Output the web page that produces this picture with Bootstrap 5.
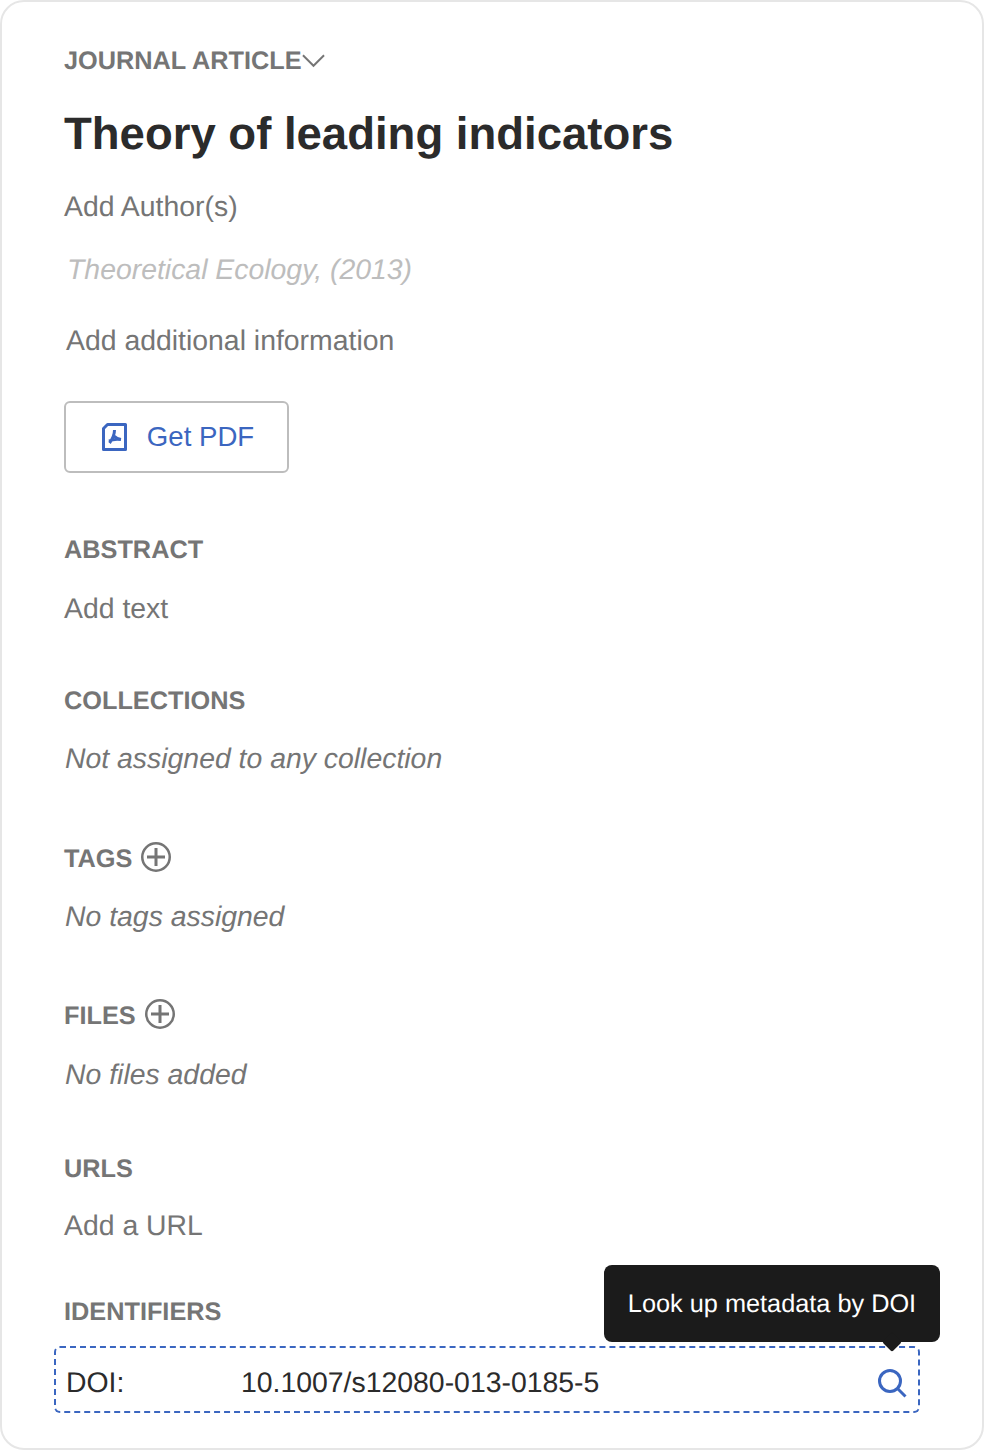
<!DOCTYPE html>
<html lang="en">
<head>
  <meta charset="UTF-8">
  <title>Theory of leading indicators</title>
  <link href="https://cdn.jsdelivr.net/npm/bootstrap@5.3.3/dist/css/bootstrap.min.css" rel="stylesheet">
  <style>
    body { margin: 0; background: #fff; font-family: "Liberation Sans", Arial, sans-serif; color: #757575; text-rendering: geometricPrecision; }
    .panel { width: 984px; height: 1450px; border: 2px solid #e6e6e6; border-radius: 24px; padding: 41px 62px 0; position: relative; }
    .sec-label { font-size: 25.3px; line-height: 36px; font-weight: 700; color: #757575; margin: 0; }
    .txt { font-size: 28.4px; line-height: 40px; margin: 0; }
    .doc-title { font-size: 45.5px; line-height: 56px; font-weight: 700; color: #2b2b2b; margin: 27px 0 0; }
    .muted-it { font-style: italic; padding-left: 1px; }
    .authors { margin-top: 25px; }
    .journal { color: #bdbdbd; padding-left: 3px; margin-top: 23px; }
    .extra-info { padding-left: 2px; margin-top: 31px; }
    .pdf-btn { width: 225px; height: 72px; border: 2px solid #bdbdbd; border-radius: 6px; background: #fff; color: #3b66c0; font-size: 27.6px; padding: 0 0 0 3px; margin-top: 40px; gap: 20px; }
    .lbl-abstract { margin-top: 59px; }
    .txt-abstract { margin-top: 21px; }
    .lbl-collections { margin-top: 54px; }
    .txt-collections { margin-top: 20px; }
    .lbl-tags { margin-top: 61px; }
    .txt-tags { margin-top: 20px; }
    .lbl-files { margin-top: 60px; }
    .txt-files { margin-top: 21px; }
    .lbl-urls { margin-top: 56px; }
    .txt-urls { margin-top: 19px; }
    .lbl-identifiers { margin-top: 48px; }
    .plus-row { gap: 9px; }
    .plus-row .sec-label { padding-top: 1px; }
    .plus-row svg { margin-bottom: 3px; }
    .doi-box { margin: 16px 0 0 -10px; height: 67px; border: 2px dashed #3b66c0; border-radius: 6px; color: #2b2b2b; font-size: 28.4px; padding: 7px 11px 0 10px; }
    .doi-key { width: 175px; }
    .tip { position: absolute; left: 602px; top: 1263px; width: 336px; height: 77px; padding-top: 2px; background: #1b1b1b; color: #fff; border-radius: 8px; font-size: 25.3px; }
    .tip::after { content: ""; position: absolute; left: 281px; bottom: -7px; width: 14px; height: 14px; background: #1b1b1b; transform: rotate(45deg); border-radius: 2px; }
  </style>
</head>
<body>
  <div class="panel">
    <div class="d-flex align-items-center">
      <h6 class="sec-label">JOURNAL ARTICLE</h6>
      <svg width="23" height="14" viewBox="0 0 24 14" fill="none" stroke="#757575" stroke-width="2"><path d="M1 1l11 11L23 1"/></svg>
    </div>
    <h1 class="doc-title">Theory of leading indicators</h1>
    <p class="txt authors">Add Author(s)</p>
    <p class="txt muted-it journal">Theoretical Ecology, (2013)</p>
    <p class="txt extra-info">Add additional information</p>
    <button class="pdf-btn d-flex align-items-center justify-content-center">
      <svg width="25" height="28" viewBox="0 0 25 28" fill="none" stroke="#3b66c0"><path d="M5.500 1.500h18v25h-22V5.500z" stroke-width="3" stroke-linejoin="round"/><path d="M12.500 7c0 5-2 9-5 13M12 13c2 2 4 3 7 3.500M7 18c3-1.500 8-2 12-1.500" stroke-width="3"/></svg>
      Get PDF
    </button>
    <h6 class="sec-label lbl-abstract">ABSTRACT</h6>
    <p class="txt txt-abstract">Add text</p>
    <h6 class="sec-label lbl-collections">COLLECTIONS</h6>
    <p class="txt muted-it txt-collections">Not assigned to any collection</p>
    <div class="d-flex align-items-center plus-row lbl-tags">
      <h6 class="sec-label">TAGS</h6>
      <svg width="30" height="30" viewBox="0 0 30 30" fill="none" stroke="#757575" stroke-width="2.500"><circle cx="15" cy="15" r="13.750"/><path d="M15 6v18M6 15h18" stroke-width="3"/></svg>
    </div>
    <p class="txt muted-it txt-tags">No tags assigned</p>
    <div class="d-flex align-items-center plus-row lbl-files">
      <h6 class="sec-label">FILES</h6>
      <svg width="30" height="30" viewBox="0 0 30 30" fill="none" stroke="#757575" stroke-width="2.500"><circle cx="15" cy="15" r="13.750"/><path d="M15 6v18M6 15h18" stroke-width="3"/></svg>
    </div>
    <p class="txt muted-it txt-files">No files added</p>
    <h6 class="sec-label lbl-urls">URLS</h6>
    <p class="txt txt-urls">Add a URL</p>
    <h6 class="sec-label lbl-identifiers">IDENTIFIERS</h6>
    <div class="doi-box d-flex align-items-center">
      <span class="doi-key">DOI:</span>
      <span class="flex-grow-1">10.1007/s12080-013-0185-5</span>
      <svg width="30" height="30" viewBox="0 0 30 30" fill="none" stroke="#3b66c0" stroke-width="3"><circle cx="13" cy="13" r="10.500"/><path d="M20.500 20.500l8 8"/></svg>
    </div>
    <div class="tip d-flex align-items-center justify-content-center">Look up metadata by DOI</div>
  </div>
</body>
</html>
